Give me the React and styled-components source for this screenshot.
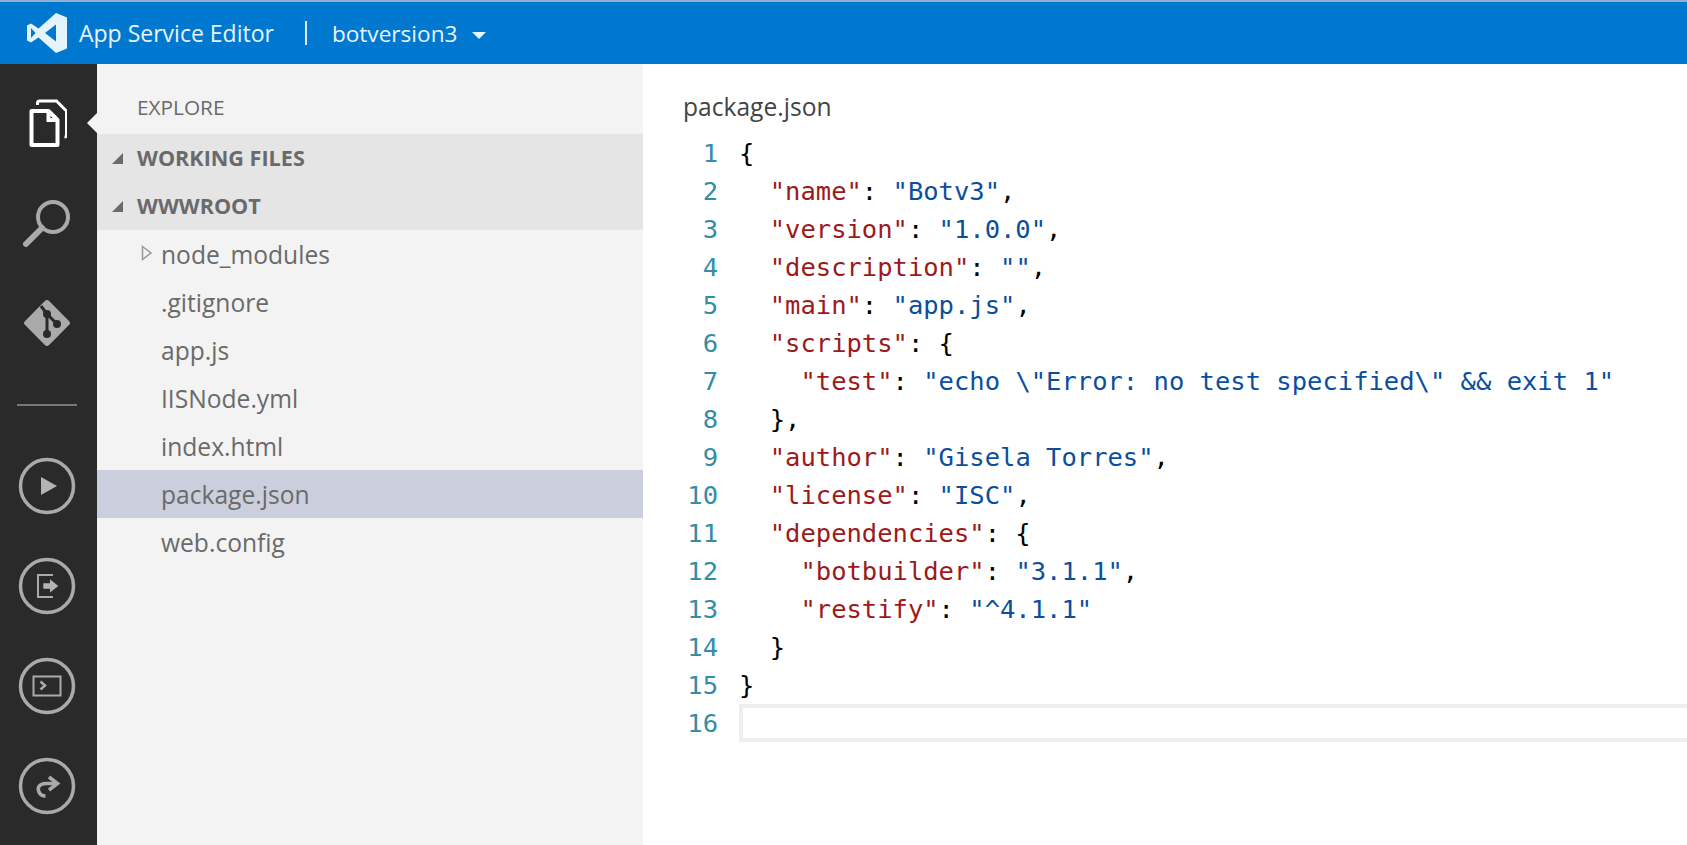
import React from "react";
import styled, { createGlobalStyle } from "styled-components";

const files = [".gitignore", "app.js", "IISNode.yml", "index.html", "package.json", "web.config"];

// k = key, s = string, p = punctuation
const code = [
	[["p", "{"]],
	[["p", "  "], ["k", '"name"'], ["p", ": "], ["s", '"Botv3"'], ["p", ","]],
	[["p", "  "], ["k", '"version"'], ["p", ": "], ["s", '"1.0.0"'], ["p", ","]],
	[["p", "  "], ["k", '"description"'], ["p", ": "], ["s", '""'], ["p", ","]],
	[["p", "  "], ["k", '"main"'], ["p", ": "], ["s", '"app.js"'], ["p", ","]],
	[["p", "  "], ["k", '"scripts"'], ["p", ": {"]],
	[["p", "    "], ["k", '"test"'], ["p", ": "], ["s", '"echo \\"Error: no test specified\\" && exit 1"']],
	[["p", "  },"]],
	[["p", "  "], ["k", '"author"'], ["p", ": "], ["s", '"Gisela Torres"'], ["p", ","]],
	[["p", "  "], ["k", '"license"'], ["p", ": "], ["s", '"ISC"'], ["p", ","]],
	[["p", "  "], ["k", '"dependencies"'], ["p", ": {"]],
	[["p", "    "], ["k", '"botbuilder"'], ["p", ": "], ["s", '"3.1.1"'], ["p", ","]],
	[["p", "    "], ["k", '"restify"'], ["p", ": "], ["s", '"^4.1.1"']],
	[["p", "  }"]],
	[["p", "}"]],
	[],
];

const App = () => {
	return (
		<>
			<GlobalStyle />
			<Page>
				<Header>
					<svg width="40" height="40" viewBox="0 0 40 40">
						<path
							fill="#e4f3fc"
							fillRule="evenodd"
							d="M29 0L40 4.5V35.5L29 40L11.5 24.5L4 29.5L0 27.5V12.5L4 10.5L11.5 15.5ZM4 15V25L8.5 20ZM29 11.5L18 20L29 28.5Z"
						/>
					</svg>
					<AppName>App Service Editor</AppName>
					<Separator />
					<SiteName>botversion3</SiteName>
					<Caret />
				</Header>
				<Body>
					<ActivityBar>
						<IconSlot $active>
							<svg width="40" height="48" viewBox="-1.5 0 40 48" fill="none" stroke="#fff">
								<path strokeWidth="3" d="M9 6V4Q9 2 11 2H28L38 12V36Q38 38 36 38" />
								<path strokeWidth="4" d="M3 12H20L29 21V46H3Z" strokeLinejoin="round" />
								<path strokeWidth="4" d="M20 12V21H29" />
							</svg>
						</IconSlot>
						<IconSlot>
							<svg width="50" height="50" viewBox="0 0 50 50" fill="none" stroke="#aaa">
								<circle cx="31" cy="19" r="15" strokeWidth="4" />
								<path strokeWidth="6" strokeLinecap="round" d="M20 30L4 46" />
							</svg>
						</IconSlot>
						<IconSlot>
							<svg width="50" height="50" viewBox="0 0 50 50">
								<rect x="8" y="8" width="34" height="34" rx="3" fill="#aaa" transform="rotate(45 25 25)" />
								<path stroke="#2a2a2a" strokeWidth="3" fill="none" d="M19 8L25 16V36M25 16L35 26" />
								<circle cx="25" cy="16" r="4" fill="#2a2a2a" />
								<circle cx="35" cy="26" r="4" fill="#2a2a2a" />
								<circle cx="25" cy="36" r="4" fill="#2a2a2a" />
							</svg>
						</IconSlot>
						<BarDivider />
						<IconSlot>
							<CircleIcon>
								<path fill="#b4b4b4" stroke="none" d="M24 21L40 30L24 39Z" />
							</CircleIcon>
						</IconSlot>
						<IconSlot>
							<CircleIcon>
								<path strokeWidth="2" d="M36 19H21V41H36" />
								<path
									fill="#b4b4b4"
									stroke="none"
									d="M26.3 27.3H33V23.3L41.3 30L33 36.5V32.7H26.3Z"
								/>
							</CircleIcon>
						</IconSlot>
						<IconSlot>
							<CircleIcon>
								<rect x="16.5" y="20.5" width="27" height="19" strokeWidth="2" />
								<path strokeWidth="2.5" d="M23.5 25.5L28 29.5L23.5 33.5" />
							</CircleIcon>
						</IconSlot>
						<IconSlot>
							<CircleIcon>
								<path strokeWidth="3.5" d="M40 27.5H29C22 27.5 20 32 22 36C23 38.5 26 40 28.5 40" />
								<path strokeWidth="3.5" d="M32 21L40.5 27.5L32 34" />
							</CircleIcon>
						</IconSlot>
					</ActivityBar>
					<Explorer>
						<ExplorerTitle>EXPLORE</ExplorerTitle>
						<SectionRow>
							<SectionArrow />
							WORKING FILES
						</SectionRow>
						<SectionRow>
							<SectionArrow />
							WWWROOT
						</SectionRow>
						<FileRow>
							<FolderArrow />
							node_modules
						</FileRow>
						{files.map((name) => (
							<FileRow key={name} $selected={name === "package.json"}>
								{name}
							</FileRow>
						))}
					</Explorer>
					<Editor>
						<FileTitle>package.json</FileTitle>
						{code.map((tokens, i) => (
							<CodeRow key={i}>
								<LineNumber>{i + 1}</LineNumber>
								<CodeText $current={i === 15}>
									{tokens.map(([kind, text], j) => (
										<Token key={j} $kind={kind}>
											{text}
										</Token>
									))}
								</CodeText>
							</CodeRow>
						))}
					</Editor>
				</Body>
			</Page>
		</>
	);
};

const CircleIcon = ({ children }) => (
	<svg width="60" height="60" viewBox="0 0 60 60" fill="none" stroke="#aaa">
		<circle cx="30" cy="30" r="26.5" strokeWidth="3.5" />
		{children}
	</svg>
);

const GlobalStyle = createGlobalStyle`
	html, body {
		margin: 0;
		height: 100%;
		overflow: hidden;
		background: #fff;
	}
`;

const Page = styled.div`
	height: 845px;
	display: flex;
	flex-direction: column;
	font-family: "Open Sans", "Noto Sans", sans-serif;
`;

const Header = styled.div`
	height: 62px;
	flex-shrink: 0;
	border-top: 2px solid #8fb0cf;
	background-color: #0078cf;
	color: #e8f4fc;
	display: flex;
	align-items: center;
	padding-left: 27px;
	font-size: 23px;
`;

const AppName = styled.span`
	margin-left: 12px;
`;

const Separator = styled.span`
	width: 2px;
	height: 24px;
	margin: 0 25px 0 31px;
	background-color: #dceefa;
`;

const SiteName = styled.span`
	font-size: 22.6px;
`;

const Caret = styled.span`
	margin: 4px 0 0 15px;
	border-left: 7px solid transparent;
	border-right: 7px solid transparent;
	border-top: 7px solid #e8f4fc;
`;

const Body = styled.div`
	flex: 1;
	display: flex;
	min-height: 0;
`;

const ActivityBar = styled.div`
	width: 97px;
	flex-shrink: 0;
	padding-top: 9px;
	background-color: #2a2a2a;
	display: flex;
	flex-direction: column;
	align-items: center;
`;

const IconSlot = styled.div`
	position: relative;
	width: 97px;
	height: 100px;
	box-sizing: border-box;
	padding-right: 3px;
	display: flex;
	align-items: center;
	justify-content: center;

	${(props) =>
		props.$active &&
		`&::after {
			content: "";
			position: absolute;
			right: 0;
			top: 40px;
			border-top: 10px solid transparent;
			border-bottom: 10px solid transparent;
			border-right: 10px solid #f3f3f3;
		}`}
`;

const BarDivider = styled.div`
	width: 60px;
	height: 2px;
	margin: 31px 3px 30px 0;
	background-color: #777;
`;

const Explorer = styled.div`
	width: 546px;
	flex-shrink: 0;
	background-color: #f3f3f3;
	color: #6a6a6a;
`;

const ExplorerTitle = styled.div`
	height: 70px;
	padding: 23px 0 0 40px;
	box-sizing: border-box;
	line-height: 40px;
	font-size: 20.8px;
`;

const SectionRow = styled.div`
	height: 48px;
	display: flex;
	align-items: center;
	padding: 0 0 2px 15px;
	box-sizing: border-box;
	background-color: #e5e5e5;
	font-size: 21.6px;
	font-weight: 700;
`;

const SectionArrow = styled.span`
	margin: 2px 14px 0 0;
	border-left: 11px solid transparent;
	border-bottom: 11px solid #6a6a6a;
`;

const FileRow = styled.div`
	position: relative;
	height: 48px;
	display: flex;
	align-items: center;
	padding-left: 64px;
	font-size: 24.6px;
	background-color: ${(props) => (props.$selected ? "#cbcfdd" : "transparent")};
`;

const FolderArrow = styled.svg.attrs({
	width: 12,
	height: 16,
	viewBox: "0 0 12 16",
	children: <path d="M1.5 1.5L10 8L1.5 14.5Z" fill="none" stroke="#999" strokeWidth="1.5" />,
})`
	position: absolute;
	left: 44px;
	top: 15px;
`;

const Editor = styled.div`
	flex: 1;
	min-width: 0;
	padding: 0 0 0 40px;
	background-color: #fff;
`;

const FileTitle = styled.div`
	height: 70px;
	padding-top: 23px;
	box-sizing: border-box;
	line-height: 40px;
	font-size: 24.6px;
	color: #444;
`;

const CodeRow = styled.div`
	height: 38px;
	display: flex;
	align-items: stretch;
	font-family: "DejaVu Sans Mono", monospace;
	font-size: 25.5px;
	line-height: 38px;
`;

const LineNumber = styled.div`
	width: 35px;
	margin-right: 21px;
	flex-shrink: 0;
	text-align: right;
	color: #348da8;
`;

const CodeText = styled.div`
	flex: 1;
	white-space: pre;
	box-sizing: border-box;
	${(props) => props.$current && "border: 4px solid #eeeeee; border-right: 0;"}
`;

const tokenColors = { k: "#9c1a1a", s: "#0a4f9e", p: "#000" };

const Token = styled.span`
	color: ${(props) => tokenColors[props.$kind]};
`;

export default App;
